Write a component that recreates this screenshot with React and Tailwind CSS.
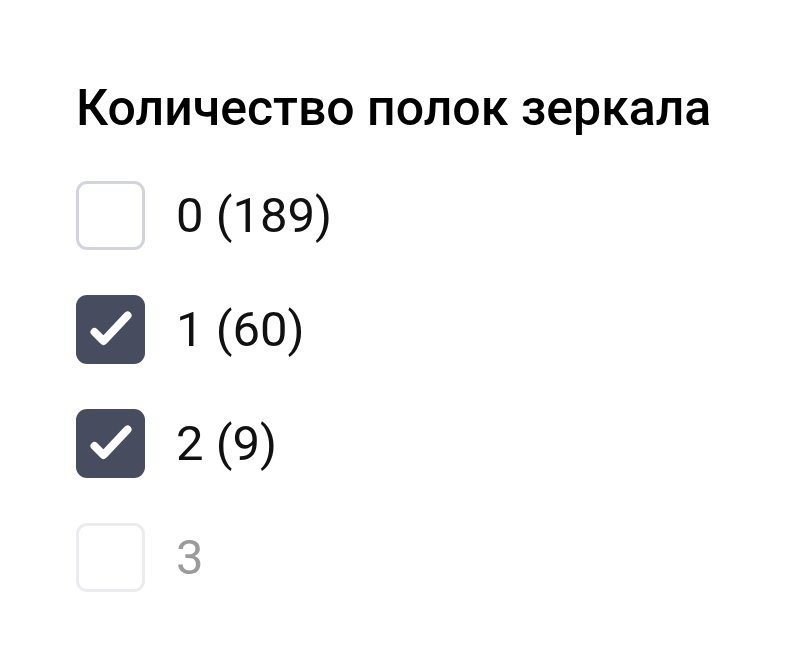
const options = [
    { label: '0 (189)', checked: false },
    { label: '1 (60)', checked: true },
    { label: '2 (9)', checked: true },
    { label: '3', checked: false, disabled: true },
];

// Case à cocher — trois états : vide, cochée, désactivée
const Box = ({ checked, disabled }) => {
    if (checked) {
        return (
            <span className="w-[69px] h-[69px] rounded-[11px] bg-[#474c5f] shrink-0">
                <svg viewBox="0 0 69 69" className="w-full h-full" aria-hidden="true">
                    <path
                        d="M18.5 37 L27.5 46 L51.5 20.5"
                        fill="none"
                        stroke="#fff"
                        strokeWidth="8"
                        strokeLinecap="round"
                        strokeLinejoin="round"
                    />
                </svg>
            </span>
        );
    }
    return (
        <span
            className={`w-[69px] h-[69px] rounded-[11px] border-[3px] bg-white shrink-0 ${
                disabled ? 'border-[#ececef]' : 'border-[#d3d4db]'
            }`}
        />
    );
};

const App = () => (
    <div className="min-h-screen bg-white px-[76px] pt-[80px] font-['Roboto',sans-serif]">
        <h3 className="text-[50px] font-medium text-black leading-[56px]">
            Количество полок зеркала
        </h3>
        <ul className="mt-[45px] flex flex-col gap-[45px]">
            {options.map((o) => (
                <li key={o.label} className="flex items-center gap-[31px]">
                    <Box checked={o.checked} disabled={o.disabled} />
                    <span className={`text-[49px] leading-none ${o.disabled ? 'text-[#9b9b9b]' : 'text-[#111]'}`}>
                        {o.label}
                    </span>
                </li>
            ))}
        </ul>
    </div>
);

export default App;
